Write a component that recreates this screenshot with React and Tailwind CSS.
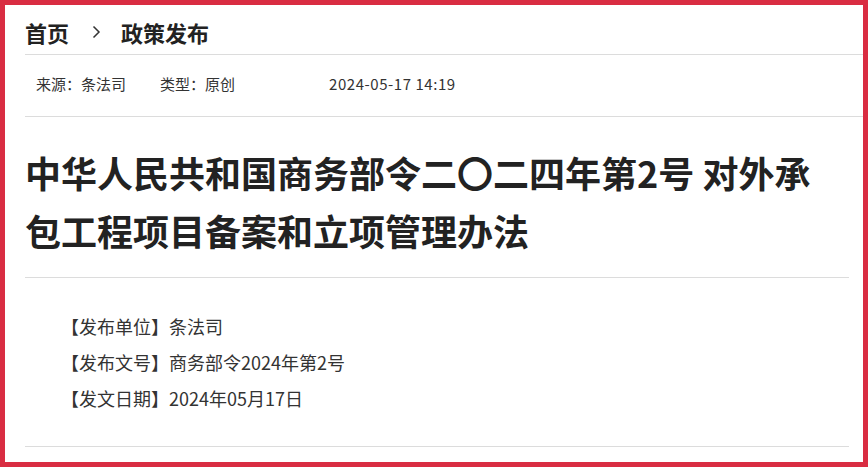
const App = () => {
  const info = [
    ["【发布单位】", "条法司"],
    ["【发布文号】", "商务部令2024年第2号"],
    ["【发文日期】", "2024年05月17日"],
  ];

  return (
    <div
      className="w-[868px] h-[467px] bg-white border-[5px] border-[#d92d42] text-[#222] overflow-hidden"
      style={{ fontFamily: '"Noto Sans CJK SC", "Noto Sans", sans-serif' }}
    >
      <div className="ml-[20px]">
        {/* breadcrumb */}
        <div className="flex items-center pt-[12px] pb-[7px] border-b border-[#dcdcdc] text-[22px] leading-[30px] font-bold">
          <span>首页</span>
          <svg className="ml-[22px] mr-[20px]" width="10" height="14" viewBox="0 0 10 14" fill="none">
            <path d="M2.5 1.5 L8 7 L2.5 12.5" stroke="#333" strokeWidth="1.5" />
          </svg>
          <span>政策发布</span>
        </div>

        {/* meta */}
        <div className="flex pt-[17px] pb-[20px] pl-[11px] border-b border-[#dcdcdc] text-[15px] leading-[24px] text-[#333]">
          <span>来源：条法司</span>
          <span className="ml-[34px]">类型：原创</span>
          <span className="ml-[94px] tracking-[0.55px]">2024-05-17 14:19</span>
        </div>

        <div className="mr-[14px]">
          <h1 className="pt-[26px] pb-[18px] pr-[12px] border-b border-[#dcdcdc] text-[36px] leading-[58px] font-bold">
            中华人民共和国商务部令二〇二四年第2号 对外承包工程项目备案和立项管理办法
          </h1>

          <div className="pt-[30px] pb-[30px] pl-[36px] border-b border-[#dcdcdc] text-[18px] leading-[36px] text-[#333]">
            {info.map(([k, v]) => (
              <p key={k}>
                {k}
                {v}
              </p>
            ))}
          </div>
        </div>
      </div>
    </div>
  );
};

export default App;
